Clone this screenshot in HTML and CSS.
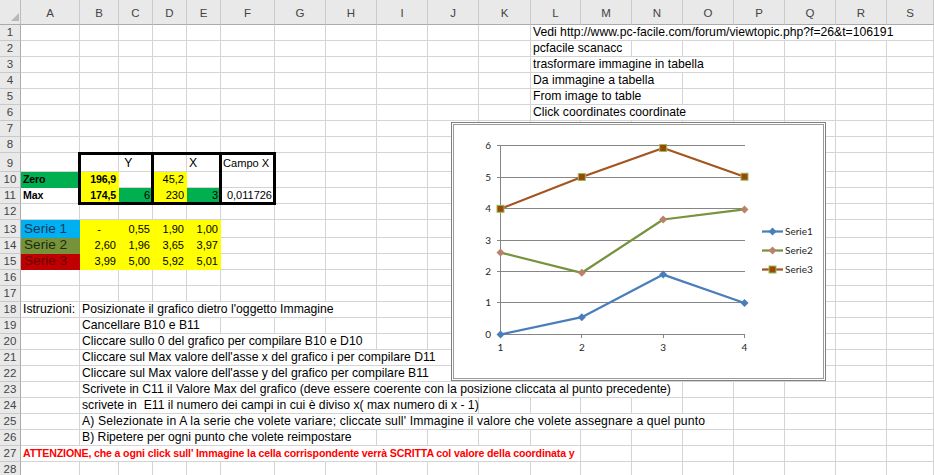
FILE: index.html
```html
<!DOCTYPE html>
<html lang="it">
<head>
<meta charset="utf-8">
<title>Foglio1</title>
<link rel="stylesheet" href="styles.css">
</head>
<body>
<div class="sheet">
<span class="corner"></span><span class="ch">A</span><span class="ch">B</span><span class="ch">C</span><span class="ch">D</span><span class="ch">E</span><span class="ch">F</span><span class="ch">G</span><span class="ch">H</span><span class="ch">I</span><span class="ch">J</span><span class="ch">K</span><span class="ch">L</span><span class="ch">M</span><span class="ch">N</span><span class="ch">O</span><span class="ch">P</span><span class="ch">Q</span><span class="ch">R</span><span class="ch">S</span>
<span class="rh">1</span><i></i><i></i><i></i><i></i><i></i><i></i><i></i><i></i><i></i><i></i><i></i><span class="t s8">Vedi http://www.pc-facile.com/forum/viewtopic.php?f=26&amp;t=106191</span>
<span class="rh">2</span><i></i><i></i><i></i><i></i><i></i><i></i><i></i><i></i><i></i><i></i><i></i><span class="t s2">pcfacile scanacc</span><i></i><i></i><i></i><i></i><i></i><i></i>
<span class="rh">3</span><i></i><i></i><i></i><i></i><i></i><i></i><i></i><i></i><i></i><i></i><i></i><span class="t s4">trasformare immagine in tabella</span><i></i><i></i><i></i><i></i>
<span class="rh">4</span><i></i><i></i><i></i><i></i><i></i><i></i><i></i><i></i><i></i><i></i><i></i><span class="t s3">Da immagine a tabella</span><i></i><i></i><i></i><i></i><i></i>
<span class="rh">5</span><i></i><i></i><i></i><i></i><i></i><i></i><i></i><i></i><i></i><i></i><i></i><span class="t s3">From image to table</span><i></i><i></i><i></i><i></i><i></i>
<span class="rh">6</span><i></i><i></i><i></i><i></i><i></i><i></i><i></i><i></i><i></i><i></i><i></i><span class="t s4">Click coordinates coordinate</span><i></i><i></i><i></i><i></i>
<span class="rh">7</span><i></i><i></i><i></i><i></i><i></i><i></i><i></i><i></i><i></i><i></i><i></i><i></i><i></i><i></i><i></i><i></i><i></i><i></i><i></i>
<span class="rh">8</span><i></i><i></i><i></i><i></i><i></i><i></i><i></i><i></i><i></i><i></i><i></i><i></i><i></i><i></i><i></i><i></i><i></i><i></i><i></i>
<span class="rh">9</span><i></i><i></i><span class="t"> Y</span><i></i><span class="t">X</span><span class="t cap">Campo X</span><i></i><i></i><i></i><i></i><i></i><i></i><i></i><i></i><i></i><i></i><i></i><i></i><i></i>
<span class="rh">10</span><span class="t b fill-green">Zero</span><span class="t r b fill-yellow">196,9</span><i></i><span class="t r n fill-yellow">45,2</span><i></i><i></i><i></i><i></i><i></i><i></i><i></i><i></i><i></i><i></i><i></i><i></i><i></i><i></i><i></i>
<span class="rh">11</span><span class="t b">Max</span><span class="t r b fill-yellow">174,5</span><span class="t r n fill-green">6</span><span class="t r n fill-yellow">230</span><span class="t r n fill-green">3</span><span class="t r n">0,011726</span><i></i><i></i><i></i><i></i><i></i><i></i><i></i><i></i><i></i><i></i><i></i><i></i><i></i>
<span class="rh">12</span><i></i><i></i><i></i><i></i><i></i><i></i><i></i><i></i><i></i><i></i><i></i><i></i><i></i><i></i><i></i><i></i><i></i><i></i><i></i>
<span class="rh">13</span><span class="t serie serie1">Serie 1</span><span class="t c n fill-yellow">-</span><span class="t r n fill-yellow">0,55</span><span class="t r n fill-yellow">1,90</span><span class="t r n fill-yellow">1,00</span><i></i><i></i><i></i><i></i><i></i><i></i><i></i><i></i><i></i><i></i><i></i><i></i><i></i><i></i>
<span class="rh">14</span><span class="t serie serie2">Serie 2</span><span class="t r n fill-yellow">2,60</span><span class="t r n fill-yellow">1,96</span><span class="t r n fill-yellow">3,65</span><span class="t r n fill-yellow">3,97</span><i></i><i></i><i></i><i></i><i></i><i></i><i></i><i></i><i></i><i></i><i></i><i></i><i></i><i></i>
<span class="rh">15</span><span class="t serie serie3">Serie 3</span><span class="t r n fill-yellow">3,99</span><span class="t r n fill-yellow">5,00</span><span class="t r n fill-yellow">5,92</span><span class="t r n fill-yellow">5,01</span><i></i><i></i><i></i><i></i><i></i><i></i><i></i><i></i><i></i><i></i><i></i><i></i><i></i><i></i>
<span class="rh">16</span><i></i><i></i><i></i><i></i><i></i><i></i><i></i><i></i><i></i><i></i><i></i><i></i><i></i><i></i><i></i><i></i><i></i><i></i><i></i>
<span class="rh">17</span><i></i><i></i><i></i><i></i><i></i><i></i><i></i><i></i><i></i><i></i><i></i><i></i><i></i><i></i><i></i><i></i><i></i><i></i><i></i>
<span class="rh">18</span><span class="t">Istruzioni:</span><span class="t s7">Posizionate il grafico dietro l'oggetto Immagine</span><i></i><i></i><i></i><i></i><i></i><i></i><i></i><i></i><i></i><i></i><i></i>
<span class="rh">19</span><i></i><span class="t s4">Cancellare B10 e B11</span><i></i><i></i><i></i><i></i><i></i><i></i><i></i><i></i><i></i><i></i><i></i><i></i><i></i><i></i>
<span class="rh">20</span><i></i><span class="t s7">Cliccare sullo 0 del grafico per compilare B10 e D10</span><i></i><i></i><i></i><i></i><i></i><i></i><i></i><i></i><i></i><i></i><i></i>
<span class="rh">21</span><i></i><span class="t s9">Cliccare sul Max valore dell'asse x del grafico i per compilare D11</span><i></i><i></i><i></i><i></i><i></i><i></i><i></i><i></i><i></i>
<span class="rh">22</span><i></i><span class="t s9">Cliccare sul Max valore dell'asse y del grafico per compilare B11</span><i></i><i></i><i></i><i></i><i></i><i></i><i></i><i></i><i></i>
<span class="rh">23</span><i></i><span class="t s13">Scrivete in C11 il Valore Max del grafico (deve essere coerente con la posizione cliccata al punto precedente)</span><i></i><i></i><i></i><i></i><i></i>
<span class="rh">24</span><i></i><span class="t s9">scrivete in  E11 il numero dei campi in cui è diviso x( max numero di x - 1)</span><i></i><i></i><i></i><i></i><i></i><i></i><i></i><i></i><i></i>
<span class="rh">25</span><i></i><span class="t s14 wide">A) Selezionate in A la serie che volete variare; cliccate sull' Immagine il valore che volete assegnare a quel punto</span><i></i><i></i><i></i><i></i>
<span class="rh">26</span><i></i><span class="t s7">B) Ripetere per ogni punto che volete reimpostare</span><i></i><i></i><i></i><i></i><i></i><i></i><i></i><i></i><i></i><i></i><i></i>
<span class="rh">27</span><span class="t s12 b warn">ATTENZIONE, che a ogni click sull' Immagine la cella corrispondente verrà SCRITTA col valore della coordinata y</span><i></i><i></i><i></i><i></i><i></i><i></i><i></i>
<span class="rh">28</span><i></i><i></i><i></i><i></i><i></i><i></i><i></i><i></i><i></i><i></i><i></i><i></i><i></i><i></i><i></i><i></i><i></i><i></i><i></i>

<div class="box box-y"></div>
<div class="box box-x"></div>
<div class="box box-f"></div>

<div class="chart">
<svg width="375" height="259" viewBox="0 0 375 259">
  <rect x="0.5" y="0.5" width="374" height="258" fill="#fff" stroke="#7f7f7f"/>
  <rect x="2.5" y="2.5" width="370" height="254" fill="none" stroke="#9a9a9a"/>
  <path d="M46 23.5H294M46 55.5H294M46 86.5H294M46 118.5H294M46 149.5H294M46 180.5H294M46 212.5H294M49.5 23.5V212.5M49.5 212.5V216M130.5 212.5V216M212.5 212.5V216M293.5 212.5V216" stroke="#868686" stroke-width="1" fill="none"/>
  <g class="axis-text" text-anchor="end">
    <text x="40" y="27">6</text>
    <text x="40" y="59">5</text>
    <text x="40" y="90">4</text>
    <text x="40" y="122">3</text>
    <text x="40" y="153">2</text>
    <text x="40" y="184">1</text>
    <text x="40" y="216">0</text>
  </g>
  <g class="axis-text" text-anchor="middle">
    <text x="49.5" y="229">1</text>
    <text x="130.8" y="229">2</text>
    <text x="212.2" y="229">3</text>
    <text x="293.5" y="229">4</text>
  </g>
  <polyline points="49.5,212.5 130.8,195.2 212.2,152.6 293.5,181" fill="none" stroke="#4a7ebb" stroke-width="2.25" stroke-linejoin="round"/>
  <polyline points="49.5,130.6 130.8,150.8 212.2,97.5 293.5,87.4" fill="none" stroke="#77933c" stroke-width="2.25" stroke-linejoin="round"/>
  <polyline points="49.5,86.8 130.8,55 212.2,26 293.5,54.7" fill="none" stroke="#a4541e" stroke-width="2.25" stroke-linejoin="round"/>
  <g fill="#4a7ebb">
    <path d="M49.5 208.5l4 4-4 4-4-4z"/>
    <path d="M130.8 191.2l4 4-4 4-4-4z"/>
    <path d="M212.2 148.6l4 4-4 4-4-4z"/>
    <path d="M293.5 177l4 4-4 4-4-4z"/>
  </g>
  <g fill="#b9836a">
    <path d="M49.5 126.6l4 4-4 4-4-4z"/>
    <path d="M130.8 146.8l4 4-4 4-4-4z"/>
    <path d="M212.2 93.5l4 4-4 4-4-4z"/>
    <path d="M293.5 83.4l4 4-4 4-4-4z"/>
  </g>
  <g fill="#984807" stroke="#9bbb59" stroke-width="1">
    <rect x="46" y="83.3" width="7" height="7"/>
    <rect x="127.3" y="51.5" width="7" height="7"/>
    <rect x="208.7" y="22.5" width="7" height="7"/>
    <rect x="290" y="51.2" width="7" height="7"/>
  </g>
  <path d="M311 109.5H332" stroke="#4a7ebb" stroke-width="2.25"/>
  <path d="M321.5 105.5l4 4-4 4-4-4z" fill="#4a7ebb"/>
  <path d="M311 128.5H332" stroke="#77933c" stroke-width="2.25"/>
  <path d="M321.5 124.5l4 4-4 4-4-4z" fill="#b9836a"/>
  <path d="M311 147.5H332" stroke="#a4541e" stroke-width="2.25"/>
  <rect x="318" y="144" width="7" height="7" fill="#984807" stroke="#9bbb59"/>
  <g class="legend-text">
    <text x="334" y="113">Serie1</text>
    <text x="334" y="132">Serie2</text>
    <text x="334" y="151">Serie3</text>
  </g>
</svg>
</div>
</div>
</body>
</html>
```

FILE: styles.css
```css
html, body {
  margin: 0;
  padding: 0;
  overflow: hidden;
  background: #fff;
}

.sheet {
  position: relative;
  display: grid;
  grid-template-columns: 21px 59px 39px 34px 34px 34px 54px 51px 51px 51px 51px 52px 50px 51px 51px 51px 51px 51px 51px 47px;
  grid-template-rows: 25px repeat(8, 16px) 19px repeat(3, 16px) 18px repeat(15, 16px);
  width: 934px;
  height: 475px;
  overflow: hidden;
  font-family: "Liberation Sans", Arial, sans-serif;
  font-size: 12.2px;
  color: #000;
}

.sheet > * {
  box-sizing: border-box;
  border-right: 1px solid #d4d4d4;
  border-bottom: 1px solid #d4d4d4;
  min-width: 0;
}

.corner {
  background: #e9e9e9;
  display: flex;
  align-items: flex-end;
  justify-content: flex-end;
  padding: 0 1px 3px 0;
  border-right-color: #bcbcbc !important;
  border-bottom-color: #ababab !important;
}

.corner::after {
  content: "";
  width: 0;
  height: 0;
  border-left: 8px solid transparent;
  border-bottom: 8px solid #b8b8b8;
}

.ch {
  background: #e9e9e9;
  display: flex;
  align-items: center;
  justify-content: center;
  padding-top: 2px;
  color: #444;
  font-size: 11.5px;
  border-right-color: #c9c9c9 !important;
  border-bottom-color: #ababab !important;
}

.rh {
  background: #e9e9e9;
  display: flex;
  align-items: flex-end;
  justify-content: center;
  line-height: 15px;
  color: #444;
  font-size: 11.5px;
  border-right-color: #ababab !important;
  border-bottom-color: #c9c9c9 !important;
}

.t {
  display: flex;
  align-items: flex-end;
  padding: 0 2px;
  line-height: 15px;
  white-space: pre;
  overflow: visible;
}

.r { justify-content: flex-end; }
.c { justify-content: center; }
.n { font-size: 11px; }
.cap { font-size: 11.1px; }
.wide { letter-spacing: 0.13px; }
.b {
  font-weight: bold;
  font-size: 10.6px;
  letter-spacing: -0.15px;
}

.s2 { grid-column: span 2; }
.s3 { grid-column: span 3; }
.s4 { grid-column: span 4; }
.s7 { grid-column: span 7; }
.s8 { grid-column: span 8; }
.s9 { grid-column: span 9; }
.s12 { grid-column: span 12; }
.s13 { grid-column: span 13; }
.s14 { grid-column: span 14; }

.fill-green { background: #00b050; border-color: transparent !important; }
.fill-yellow { background: #ffff00; border-color: transparent !important; }

.serie {
  font-size: 13.6px;
  line-height: 16px;
  padding-left: 3px;
}
.serie1 { background: #00b0f0; color: #17375e; border-color: transparent !important; }
.serie2 { background: #76933c; color: #1e2a0c; border-color: transparent !important; }
.serie3 { background: #c00000; color: #700000; border-color: transparent !important; }

.warn { color: #ff0000; }

.box {
  position: absolute;
  top: -1px;
  left: -2px;
  right: -1px;
  bottom: -1px;
  border: 3px solid #000 !important;
  box-sizing: border-box;
  pointer-events: none;
}

.box-y { grid-column: 3 / 5; grid-row: 10 / 13; }
.box-x { grid-column: 5 / 7; grid-row: 10 / 13; }
.box-f { grid-column: 7 / 8; grid-row: 10 / 13; }

.chart {
  position: absolute;
  left: 451px;
  top: 122px;
  width: 375px;
  height: 259px;
  border: 0 !important;
}

.chart svg {
  display: block;
}

.axis-text text,
.legend-text text {
  font-family: Lato, "Liberation Sans", sans-serif;
  font-size: 10px;
  fill: #262626;
}
```
